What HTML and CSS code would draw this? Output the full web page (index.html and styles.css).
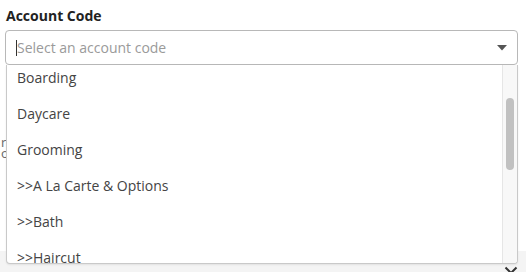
FILE: index.html
```html
<!DOCTYPE html>
<html lang="en">
<head>
<meta charset="utf-8">
<title>Account Code</title>
<link rel="stylesheet" href="styles.css">
</head>
<body>
<div class="page">
  <div class="field">
    <div class="label">Account Code</div>
    <div class="select-wrap">
      <div class="select">
        <span class="caret"></span><span class="placeholder">Select an account code</span>
        <svg class="arrow" width="10" height="6" viewBox="0 0 10 6"><polygon points="0,0 10,0 5,5.5" fill="#555"/></svg>
      </div>
      <div class="menu">
        <ul class="list">
          <li class="item">Boarding</li>
          <li class="item">Daycare</li>
          <li class="item">Grooming</li>
          <li class="item">&gt;&gt;A La Carte &amp; Options</li>
          <li class="item">&gt;&gt;Bath</li>
          <li class="item">&gt;&gt;Haircut</li>
        </ul>
        <div class="scrollbar"><div class="thumb"></div></div>
      </div>
    </div>
  </div>
  <div class="notes">
    <div>r</div>
    <div>o</div>
  </div>
  <div class="divider"></div>
  <div class="footer">
    <svg class="close" width="14" height="14" viewBox="0 0 14 14"><path d="M1.5 1.5 L12.5 12.5 M12.5 1.5 L1.5 12.5" stroke="#333" stroke-width="2" fill="none"/></svg>
  </div>
</div>
</body>
</html>
```

FILE: styles.css
```css
* { box-sizing: border-box; }
html, body { margin: 0; padding: 0; }
body {
  font-family: "Open Sans", "Noto Sans", sans-serif;
  background: #fff;
  width: 526px;
  height: 272px;
  overflow: hidden;
}
.page {
  display: flex;
  flex-direction: column;
  height: 272px;
}
.field {
  padding: 6px 0 0 5px;
}
.label {
  font-size: 14px;
  line-height: 19px;
  font-weight: 700;
  color: #222;
  padding-left: 1px;
  margin-bottom: 5px;
}
.select-wrap {
  position: relative;
  width: 513px;
}
.select {
  height: 35px;
  border: 1px solid #b8b8b8;
  border-radius: 4px;
  display: flex;
  align-items: center;
  padding: 0 10px;
  background: #fff;
}
.caret {
  display: inline-block;
  width: 1px;
  height: 16px;
  background: #333;
}
.placeholder {
  font-size: 14px;
  line-height: 19px;
  color: #9a9a9a;
  flex: 1;
}
.arrow { display: block; }
.menu {
  position: absolute;
  top: 35px;
  left: 1px;
  width: 512px;
  height: 199px;
  border: 1px solid #c9c9c9;
  border-top: none;
  border-radius: 0 0 4px 4px;
  background: #fff;
  overflow: hidden;
  box-shadow: 0 1px 2px rgba(0,0,0,0.08);
  z-index: 5;
}
.list {
  list-style: none;
  margin: -6px 0 0 0;
  padding: 0;
}
.item {
  height: 36px;
  display: flex;
  align-items: center;
  padding-left: 10px;
  font-size: 14px;
  line-height: 19px;
  color: #444;
}
.scrollbar {
  position: absolute;
  top: 0;
  right: 0;
  bottom: 0;
  width: 15px;
  background: #f8f8f8;
  border-left: 1px solid #e6e6e6;
}
.thumb {
  position: absolute;
  top: 33px;
  left: 3px;
  width: 8px;
  height: 72px;
  border-radius: 4px;
  background: #c1c1c1;
}
.notes {
  margin-top: 72px;
  font-size: 13px;
  line-height: 11px;
  color: #666;
  padding-left: 1px;
}
.divider {
  margin-top: 71px;
  height: 1px;
  background: #dedede;
}
.footer {
  margin-top: 21px;
  flex: 1;
  background: #f4f4f4;
  display: flex;
  justify-content: flex-end;
  padding: 15px 8px 0 0;
}
.close { display: block; }
```
